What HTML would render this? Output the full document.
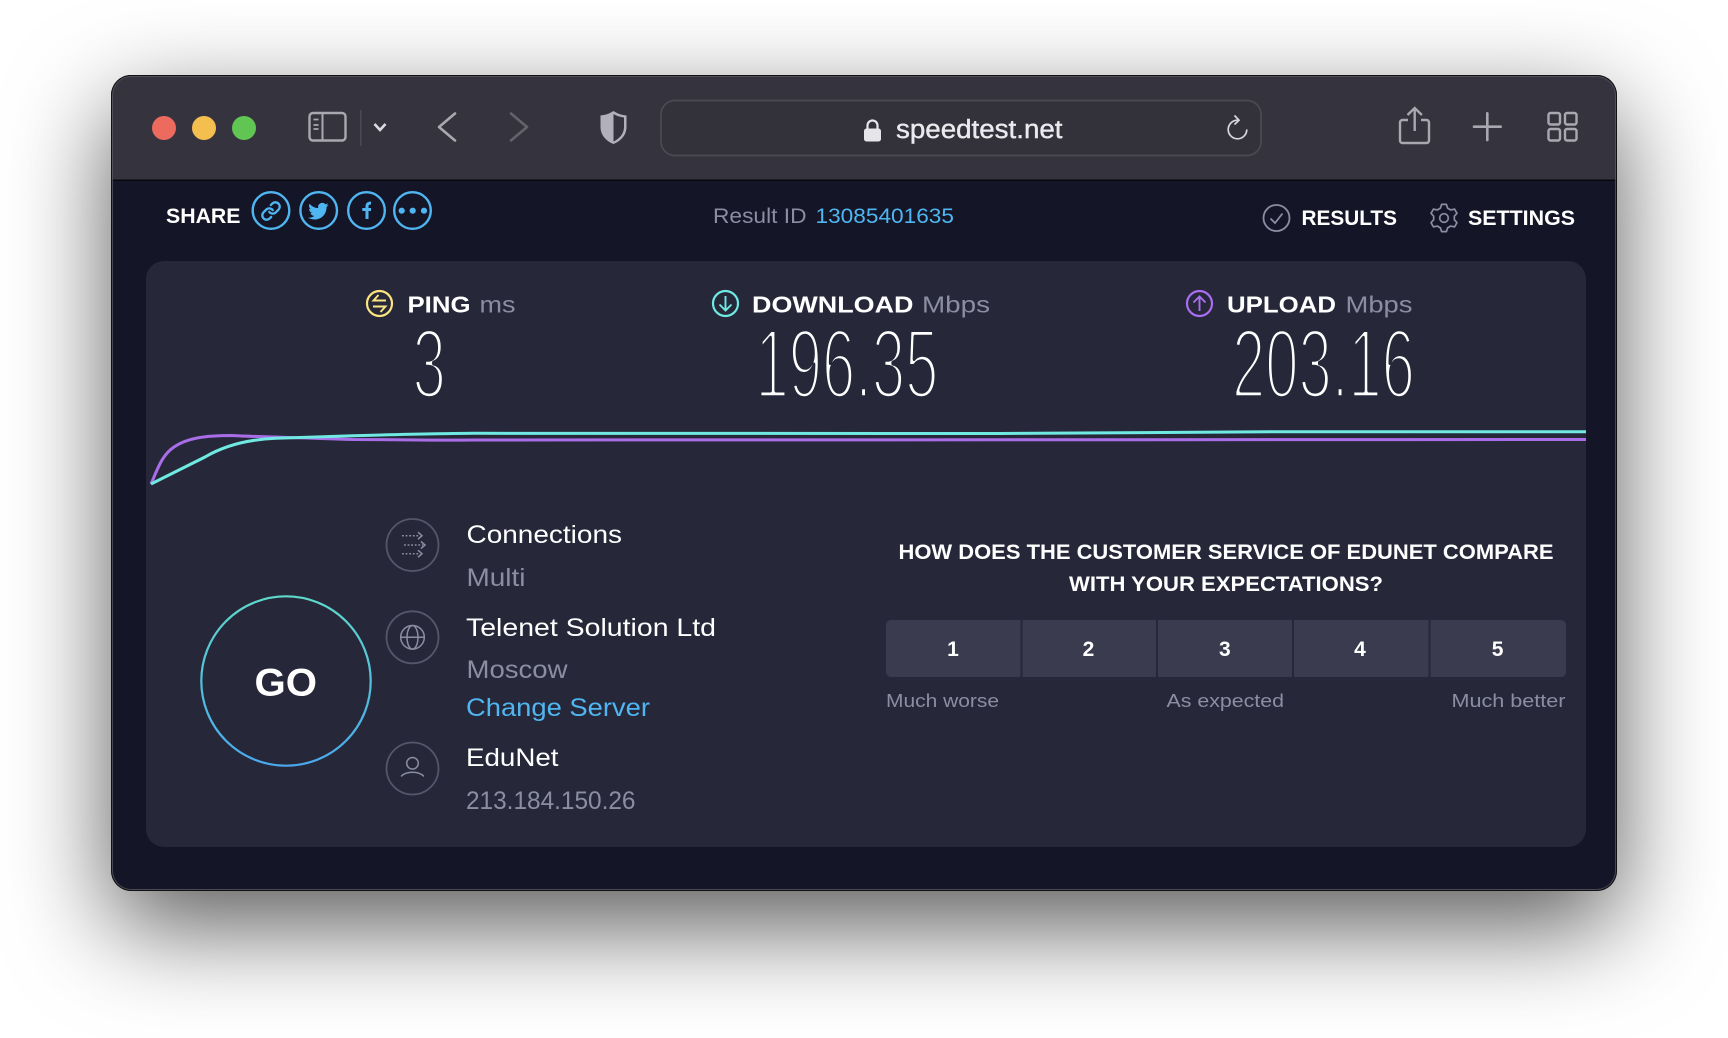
<!DOCTYPE html>
<html lang="en"><head><meta charset="utf-8"><title>speedtest.net</title>
<style>
html,body{margin:0;padding:0;background:#fff;width:1728px;height:1038px;overflow:hidden}
#win{position:absolute;left:111px;top:75px;width:1506px;height:816px;border-radius:20px;box-shadow:0 35px 100px rgba(0,0,0,.65)}
svg{position:absolute;left:0;top:0;display:block}
text{font-family:"Liberation Sans",sans-serif;white-space:pre}
.b{font-weight:700;fill:#fff}
.w{fill:#fff}
.g{fill:#8c8da1}
.bl{fill:#4fb6f2}
.big{fill:#fff;stroke:#26283a;stroke-width:4.6px;stroke-linejoin:round;font-size:98px}
</style></head><body>
<div id="win"></div>
<svg width="1728" height="1038" viewBox="0 0 1728 1038" xmlns="http://www.w3.org/2000/svg">
<defs>
<clipPath id="wc"><rect x="111" y="75" width="1506" height="816" rx="20"/></clipPath>
<clipPath id="pc"><rect x="146" y="261" width="1440" height="586" rx="18"/></clipPath>
<linearGradient id="go" x1="0" y1="0" x2="0" y2="1"><stop offset="0" stop-color="#5fd9cb"/><stop offset="1" stop-color="#4aa9ec"/></linearGradient>
</defs>
<g clip-path="url(#wc)">
<rect x="111" y="75" width="1506" height="816" fill="#141526"/>
<rect x="111" y="75" width="1506" height="105" fill="#35343e"/>
<rect x="111" y="179.500" width="1506" height="1.500" fill="#08080c"/>
</g>
<rect x="111.500" y="75.500" width="1505" height="815" rx="20" fill="none" stroke="#111" stroke-width="1"/>
<rect x="112.500" y="76.500" width="1503" height="813" rx="19" fill="none" stroke="#5a5a64" stroke-width="1" opacity=".75"/>

<!-- traffic lights -->
<circle cx="164" cy="128" r="12" fill="#ec6a5e"/>
<circle cx="204" cy="128" r="12" fill="#f4bf4f"/>
<circle cx="244" cy="128" r="12" fill="#61c554"/>

<!-- sidebar -->
<rect x="309.500" y="113" width="36" height="27.500" rx="3.500" fill="none" stroke="#a9a8b0" stroke-width="2.400"/>
<path d="M322.500 113v27.500" stroke="#a9a8b0" stroke-width="2"/>
<path d="M313.500 119.500h5M313.500 125h5M313.500 129h5" stroke="#a9a8b0" stroke-width="1.800"/>
<path d="M360.800 110v36" stroke="#4b4a54" stroke-width="1.500"/>
<path d="M374.500 124l5.500 6 5.500-6" fill="none" stroke="#dcdbe2" stroke-width="2.600"/>

<!-- nav -->
<path d="M455 113.500l-16 13.500 16 13.500" fill="none" stroke="#a9a8b0" stroke-width="2.600" stroke-linecap="round" stroke-linejoin="round"/>
<path d="M511 113.500l16 13.500-16 13.500" fill="none" stroke="#64636c" stroke-width="2.600" stroke-linecap="round" stroke-linejoin="round"/>

<!-- shield -->
<path d="M613.500 111C609 114 605 115 600.500 115.500V127C600.500 135 606 141 613.500 144C621 141 626.500 135 626.500 127V115.500C622 115 618 114 613.500 111Z" fill="#b2b1bb"/>
<path d="M613.500 114C617 116 620 117 624 117.500V127C624 134 619 139 613.500 141.500Z" fill="#35343e"/>

<!-- url bar -->
<rect x="661" y="100.500" width="600" height="55" rx="14" fill="#33323b" stroke="#4b4a52" stroke-width="1.700"/>
<rect x="864" y="128.500" width="17" height="13" rx="2.500" fill="#e6e6ea"/>
<path d="M867.500 129v-3.500a5 5 0 0 1 10 0v3.500" fill="none" stroke="#e6e6ea" stroke-width="2.200"/>
<text x="896" y="138" font-size="25.500" fill="#eaeaee" stroke="#eaeaee" stroke-width=".4" textLength="166.500" lengthAdjust="spacingAndGlyphs">speedtest.net</text>
<path d="M1246.800 129.500A9.300 9.300 0 1 1 1237.500 120.200" fill="none" stroke="#d8d8dc" stroke-width="1.700"/>
<path d="M1234.500 115.500l4.500 4.700-4.500 4.300" fill="none" stroke="#d8d8dc" stroke-width="1.700"/>

<!-- right toolbar -->
<path d="M1408 120h-5.500a2.500 2.500 0 0 0-2.500 2.500v18a2.500 2.500 0 0 0 2.500 2.500h24a2.500 2.500 0 0 0 2.500-2.500v-18a2.500 2.500 0 0 0-2.500-2.500h-5.500" fill="none" stroke="#a9a8b0" stroke-width="2.400"/>
<path d="M1414.700 131V108.500M1407.500 115l7.200-7 7.200 7" fill="none" stroke="#a9a8b0" stroke-width="2.400"/>
<path d="M1474 126.700h26.700M1487.300 113.300V140" stroke="#a9a8b0" stroke-width="2.600" stroke-linecap="round"/>
<g fill="none" stroke="#a9a8b0" stroke-width="2.400"><rect x="1548.500" y="113" width="11.500" height="11.500" rx="2"/><rect x="1565" y="113" width="11.500" height="11.500" rx="2"/><rect x="1548.500" y="129" width="11.500" height="11.500" rx="2"/><rect x="1565" y="129" width="11.500" height="11.500" rx="2"/></g>

<!-- top row -->
<text class="b" x="166" y="223" font-size="21" textLength="74.500" lengthAdjust="spacingAndGlyphs">SHARE</text>
<g fill="none" stroke="#4fb6f2" stroke-width="2.400">
<circle cx="271" cy="210.500" r="18.300"/><circle cx="318.700" cy="210.500" r="18.300"/><circle cx="366.500" cy="210.500" r="18.300"/><circle cx="412.500" cy="210.500" r="18.300"/>
<g transform="translate(260.500,200.500) scale(.875)" stroke-width="2.600" stroke-linecap="round" stroke-linejoin="round"><path d="M10 13a5 5 0 0 0 7.540.540l3-3a5 5 0 0 0-7.070-7.070l-1.720 1.710"/><path d="M14 11a5 5 0 0 0-7.540-.540l-3 3a5 5 0 0 0 7.070 7.070l1.710-1.710"/></g>
<path d="M367 219V206.500c0-2.500 1.300-3.500 4-3.500M362.300 209.500H371" stroke-width="3"/>
</g>
<path transform="translate(308.200,201) scale(.85)" fill="#4fb6f2" d="M23.953 4.570a10 10 0 01-2.825.775 4.958 4.958 0 002.163-2.723c-.951.555-2.005.959-3.127 1.184a4.920 4.920 0 00-8.384 4.482C7.690 8.095 4.067 6.130 1.640 3.162a4.822 4.822 0 00-.666 2.475c0 1.710.870 3.213 2.188 4.096a4.904 4.904 0 01-2.228-.616v.060a4.923 4.923 0 003.946 4.827 4.996 4.996 0 01-2.212.085 4.936 4.936 0 004.604 3.417 9.867 9.867 0 01-6.102 2.105c-.390 0-.779-.023-1.170-.067a13.995 13.995 0 007.557 2.209c9.053 0 13.998-7.496 13.998-13.985 0-.210 0-.420-.015-.630A9.935 9.935 0 0024 4.590z"/>
<g fill="#4fb6f2"><circle cx="401.700" cy="210.700" r="3.100"/><circle cx="412.700" cy="210.700" r="3.100"/><circle cx="424" cy="210.700" r="3.100"/></g>

<text class="g" x="713" y="223" font-size="21" textLength="93.500" lengthAdjust="spacingAndGlyphs">Result ID</text>
<text class="bl" x="815.500" y="223" font-size="21" textLength="138.500" lengthAdjust="spacingAndGlyphs">13085401635</text>

<circle cx="1276.500" cy="218" r="13" fill="none" stroke="#8c8da1" stroke-width="1.800"/>
<path d="M1270.500 218.500l4.500 4.500 7.500-9.500" fill="none" stroke="#8c8da1" stroke-width="1.800"/>
<text class="b" x="1301.500" y="225" font-size="21" textLength="95.500" lengthAdjust="spacingAndGlyphs">RESULTS</text>
<g transform="translate(1444,218)" fill="none" stroke="#8c8da1" stroke-width="1.700" stroke-linejoin="round">
<path d="M-3.600-9.900L-2.400-13.600 2.400-13.600 3.600-9.900 6.750-8.040 10.570-8.870 12.970-4.720 10.340-1.820 10.340 1.820 12.970 4.720 10.570 8.870 6.750 8.040 3.600 9.900 2.400 13.600-2.400 13.600-3.600 9.900-6.750 8.040-10.570 8.870-12.970 4.720-10.340 1.820-10.340-1.820-12.970-4.720-10.570-8.870-6.750-8.040Z"/>
<circle r="4.300"/></g>
<text class="b" x="1468" y="225" font-size="21" textLength="107" lengthAdjust="spacingAndGlyphs">SETTINGS</text>

<!-- panel -->
<rect x="146" y="261" width="1440" height="586" rx="18" fill="#26283a"/>

<!-- metric headers -->
<circle cx="379.500" cy="303.500" r="12.500" fill="none" stroke="#fbe580" stroke-width="2.200"/>
<path d="M386 300.500h-12.500l5-5.500M373 306.500h12.500l-5 5.500" fill="none" stroke="#fbe580" stroke-width="1.900"/>
<text class="b" x="407.500" y="312.500" font-size="23.500" textLength="63" lengthAdjust="spacingAndGlyphs">PING</text>
<text class="g" x="479.500" y="312.500" font-size="23.500" textLength="36" lengthAdjust="spacingAndGlyphs">ms</text>

<circle cx="725.500" cy="303.500" r="12.500" fill="none" stroke="#6fe9e1" stroke-width="2.200"/>
<path d="M725.500 296v14.500M719.500 304.500l6 6 6-6" fill="none" stroke="#6fe9e1" stroke-width="1.900"/>
<text class="b" x="752" y="312.500" font-size="23.500" textLength="161.500" lengthAdjust="spacingAndGlyphs">DOWNLOAD</text>
<text class="g" x="922" y="312.500" font-size="23.500" textLength="68" lengthAdjust="spacingAndGlyphs">Mbps</text>

<circle cx="1199.500" cy="303.500" r="12.500" fill="none" stroke="#a96df0" stroke-width="2.200"/>
<path d="M1199.500 311v-14.500M1193.500 302.500l6-6 6 6" fill="none" stroke="#a96df0" stroke-width="1.900"/>
<text class="b" x="1227" y="312.500" font-size="23.500" textLength="109" lengthAdjust="spacingAndGlyphs">UPLOAD</text>
<text class="g" x="1345.500" y="312.500" font-size="23.500" textLength="67" lengthAdjust="spacingAndGlyphs">Mbps</text>

<!-- big numbers -->
<text class="big" transform="translate(412.500,397.500) scale(.612,1)">3</text>
<text class="big" transform="translate(755.500,397.500) scale(.61,1)">196.35</text>
<text class="big" transform="translate(1232,397.500) scale(.61,1)">203.16</text>

<!-- graph -->
<g fill="none" stroke-width="3" clip-path="url(#pc)">
<path stroke="#a96de8" d="M151 484C158 468 162 455 174 447C187 438 205 435.500 232 435.500C260 437 300 437.500 353 439.500C400 439.500 430 440.500 474 440C600 439 1000 439.500 1600 439.500"/>
<path stroke="#6fe9e1" d="M151 484L205 457C222 447 245 439.500 276 438.300C300 437.500 330 436.500 353 435.700C400 434.500 440 433.500 474 433.300C600 434 800 433.500 1000 433.500C1100 433.500 1200 433 1282 431.700C1400 431.700 1500 431.700 1600 431.700"/>
</g>

<!-- GO -->
<circle cx="286" cy="681" r="84.700" fill="none" stroke="url(#go)" stroke-width="2.200"/>
<text class="b" x="254.500" y="695.500" font-size="39" textLength="62.500" lengthAdjust="spacingAndGlyphs">GO</text>

<!-- info icons -->
<g fill="none" stroke="#55566a" stroke-width="1.800"><circle cx="412.500" cy="545" r="26"/><circle cx="412.500" cy="637.300" r="26"/><circle cx="412.500" cy="768.500" r="26"/></g>
<g fill="none" stroke="#8c8da1" stroke-width="1.500">
<path d="M402 535.700h18M404 545h19M402 553.700h18" stroke-dasharray="1.800 1.800"/>
<path d="M418 532.200l4 3.500-4 3.500M421 541.500l4 3.500-4 3.500M418 550.200l4 3.500-4 3.500"/>
<circle cx="412.500" cy="637.300" r="11.800"/><ellipse cx="412.500" cy="637.300" rx="5.500" ry="11.800"/><path d="M400.700 637.300h23.600"/>
<circle cx="412.500" cy="763.300" r="5.800"/><path d="M401.500 776c3-3 7-3.800 11-3.800s8 .8 11 3.800" stroke-linecap="round"/>
</g>

<!-- info text -->
<text class="w" x="466.500" y="543" font-size="25" textLength="155.500" lengthAdjust="spacingAndGlyphs">Connections</text>
<text class="g" x="466.500" y="586" font-size="25" textLength="59" lengthAdjust="spacingAndGlyphs">Multi</text>
<text class="w" x="466" y="636" font-size="25" textLength="250" lengthAdjust="spacingAndGlyphs">Telenet Solution Ltd</text>
<text class="g" x="466.500" y="678" font-size="25" textLength="101" lengthAdjust="spacingAndGlyphs">Moscow</text>
<text class="bl" x="466" y="716" font-size="25" textLength="184" lengthAdjust="spacingAndGlyphs">Change Server</text>
<text class="w" x="466" y="766" font-size="25" textLength="92.500" lengthAdjust="spacingAndGlyphs">EduNet</text>
<text class="g" x="466" y="809" font-size="25" textLength="169.500" lengthAdjust="spacingAndGlyphs">213.184.150.26</text>

<!-- survey -->
<text class="b" x="898.500" y="559" font-size="21" textLength="655" lengthAdjust="spacingAndGlyphs">HOW DOES THE CUSTOMER SERVICE OF EDUNET COMPARE</text>
<text class="b" x="1069" y="591" font-size="21" textLength="314" lengthAdjust="spacingAndGlyphs">WITH YOUR EXPECTATIONS?</text>
<rect x="886" y="620" width="680" height="57" rx="5" fill="#3a3b4f"/>
<g fill="#26283a"><rect x="1020.500" y="620" width="2" height="57"/><rect x="1156" y="620" width="2" height="57"/><rect x="1292" y="620" width="2" height="57"/><rect x="1428.500" y="620" width="2" height="57"/></g>
<g class="b" font-size="21" font-weight="700" fill="#fff" text-anchor="middle">
<text x="953" y="656">1</text><text x="1088.500" y="656">2</text><text x="1224.800" y="656">3</text><text x="1360" y="656">4</text><text x="1497.600" y="656">5</text>
</g>
<text class="g" x="886" y="707" font-size="18.500" textLength="113" lengthAdjust="spacingAndGlyphs">Much worse</text>
<text class="g" x="1166.500" y="707" font-size="18.500" textLength="117.500" lengthAdjust="spacingAndGlyphs">As expected</text>
<text class="g" x="1451.500" y="707" font-size="18.500" textLength="114" lengthAdjust="spacingAndGlyphs">Much better</text>
</svg>
</body></html>
